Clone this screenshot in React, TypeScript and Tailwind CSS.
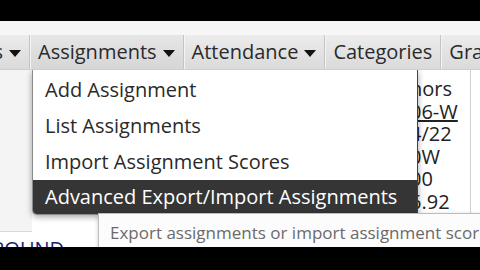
import React from 'react';

const font = { fontFamily: '"Open Sans", "Noto Sans", sans-serif' };

function Caret() {
  return (
    <svg width="12" height="7" viewBox="0 0 12 7" className="ml-[6px] mt-[3px] shrink-0">
      <path d="M0 0 L12 0 L6 7 Z" fill="#111" />
    </svg>
  );
}

function NavItem({ label, caret, className = '' }: { label: string; caret?: boolean; className?: string }) {
  return (
    <div
      className={`flex items-center h-full px-[8px] border-l border-[#c4c4c4] shadow-[inset_1px_0_0_#f4f4f4] whitespace-nowrap shrink-0 ${className}`}
    >
      <span>{label}</span>
      {caret && <Caret />}
    </div>
  );
}

export default function App() {
  const menu = ['Add Assignment', 'List Assignments', 'Import Assignment Scores'];
  const rightCol = ['nors', '06-W', '4/22', '0W', '00', '6.92'];

  return (
    <div className="w-full h-[270px] overflow-hidden bg-white flex flex-col text-[#222]" style={font}>
      {/* letterbox top */}
      <div className="h-[21px] bg-black shrink-0" />
      <div className="h-[14px] bg-[#f6f6f6] shrink-0" />

      {/* Menu bar */}
      <div className="h-[35px] shrink-0 flex items-stretch bg-gradient-to-b from-[#ececec] to-[#dadada] border-b border-[#cfcfcf] text-[20px] text-[#2a2a2a] overflow-hidden">
        <div className="w-[29px] shrink-0 overflow-hidden flex justify-end">
          <div className="flex items-center pr-[8px] whitespace-nowrap">
            <span>Students</span>
            <Caret />
          </div>
        </div>
        <NavItem label="Assignments" caret className="bg-gradient-to-b from-[#e6e6e6] to-[#d6d6d6]" />
        <NavItem label="Attendance" caret />
        <NavItem label="Categories" />
        <NavItem label="Grades" />
      </div>

      {/* Page content */}
      <div className="relative h-[177px] shrink-0 bg-white overflow-hidden">
        <div className="flex h-full">
          <div className="w-[32px] shrink-0 flex flex-col">
            <div className="h-[162px] shrink-0 bg-[#f4f4f4] border-b border-[#d8d8d8]" />
            <div className="text-[#1b1f6e] text-[20px] leading-none pt-[7px] -ml-[8px] whitespace-nowrap">ROUND</div>
          </div>
          <div className="flex-1" />
          <div className="w-[53px] shrink-0 border-r border-[#cfcfcf] pt-[8px] text-[20px] leading-[22.6px] text-[#222] overflow-hidden whitespace-nowrap">
            {rightCol.map((t, i) => (
              <div key={t} className={`-ml-[8px] ${i === 1 ? 'underline' : ''}`}>
                {t}
              </div>
            ))}
          </div>
          <div className="w-[9px] shrink-0 bg-white" />
        </div>

        {/* Dropdown menu */}
        <div className="absolute left-[32px] top-0 w-[386px] h-[145px] bg-white border-x border-b border-[#8a8a8a] border-r-[#444] rounded-bl-[5px] shadow-[0_2px_6px_rgba(0,0,0,0.35)] flex flex-col text-[20px] text-[#2a2a2a]">
          <div className="pt-[2px]">
            {menu.map((m) => (
              <div key={m} className="h-[36px] flex items-center px-[12px] whitespace-nowrap">
                {m}
              </div>
            ))}
          </div>
          <div className="mt-auto h-[35px] bg-[#353535] text-white flex items-center px-[12px] whitespace-nowrap rounded-bl-[4px]">
            Advanced Export/Import Assignments
          </div>
        </div>

        {/* Tooltip */}
        <div className="absolute left-[98px] top-[143px] w-[382px] h-[50px] bg-[#fcfcfc] border border-[#bdbdbd] border-r-0 shadow-[0_1px_4px_rgba(0,0,0,0.2)] pl-[11px] pt-[6px] text-[17px] text-[#6a6a6a] whitespace-nowrap overflow-hidden">
          Export assignments or import assignment scores
        </div>
      </div>

      {/* letterbox bottom */}
      <div className="flex-1 bg-black" />
    </div>
  );
}
